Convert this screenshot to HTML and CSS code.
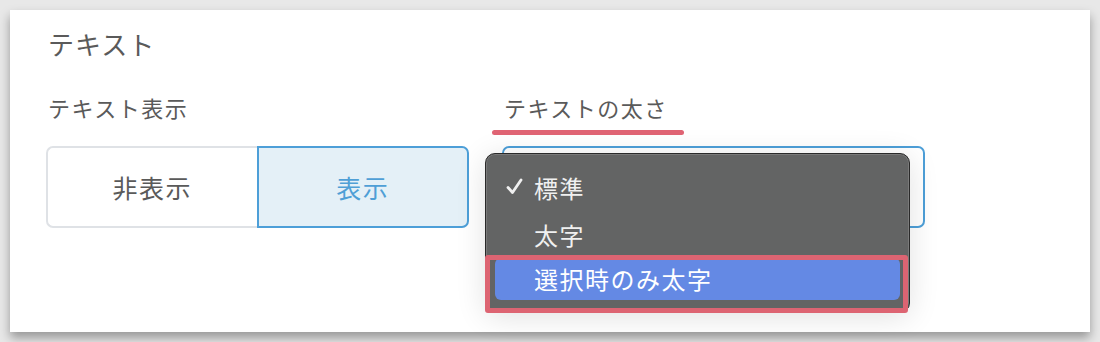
FILE: index.html
```html
<!DOCTYPE html>
<html lang="ja">
<head>
    <meta charset="UTF-8">
    <meta name="viewport" content="width=device-width, initial-scale=1.0">
    <title>テキスト設定</title>
    <link rel="stylesheet" href="styles.css">
</head>
<body>
    <div class="panel">
        <h2 class="panel-title">テキスト</h2>
        <div class="settings-row">
            <div class="setting">
                <div class="setting-label">テキスト表示</div>
                <div class="segmented">
                    <button class="segment">非表示</button>
                    <button class="segment active">表示</button>
                </div>
            </div>
            <div class="setting">
                <div class="setting-label marked">テキストの太さ</div>
                <div class="select-wrap">
                    <div class="select-box"></div>
                    <div class="popup-menu">
                        <div class="menu-item checked">
                            <svg class="check" width="17" height="17" viewBox="0 0 17 17"><path d="M2 9.5 L6.5 14.5 L15 2" fill="none" stroke="#f0f0f0" stroke-width="2.8" stroke-linecap="round" stroke-linejoin="round"/></svg>
                            標準
                        </div>
                        <div class="menu-item">太字</div>
                        <div class="menu-item highlighted">選択時のみ太字</div>
                        <div class="menu-mark"></div>
                    </div>
                </div>
            </div>
        </div>
    </div>
</body>
</html>
```

FILE: styles.css
```css
* {
    margin: 0;
    padding: 0;
    box-sizing: border-box;
    font-family: 'Noto Sans CJK JP', 'Noto Sans', sans-serif;
}
body {
    background-color: #e8e8e8;
    padding: 10px;
    height: 342px;
    overflow: hidden;
}
.panel {
    width: 1080px;
    height: 322px;
    background-color: white;
    box-shadow: 0 6px 10px rgba(0,0,0,0.35);
    padding: 16px 36px 0;
    color: #5a5a5a;
}
.panel-title {
    font-size: 26px;
    font-weight: normal;
    letter-spacing: 1px;
    line-height: 36px;
    padding-left: 2px;
}
.settings-row {
    display: flex;
    gap: 33px;
    margin-top: 30px;
}
.setting {
    width: 423px;
}
.setting-label {
    font-size: 22px;
    letter-spacing: 1.5px;
    line-height: 30px;
    padding-left: 2px;
    margin-bottom: 24px;
    position: relative;
}
.setting-label.marked::after {
    content: '';
    position: absolute;
    left: -10px;
    width: 192px;
    bottom: -13px;
    height: 5px;
    border-radius: 3px;
    background-color: #e06474;
}

/* Segmented control */
.segmented {
    display: flex;
    height: 82px;
}
.segment {
    flex: 1;
    background: white;
    border: 2px solid #dfe2e6;
    font-size: 25px;
    letter-spacing: 1.5px;
    color: #5a5a5a;
}
.segment:first-child {
    border-right: none;
    border-radius: 7px 0 0 7px;
}
.segment.active {
    background-color: #e4f0f7;
    border-color: #4d9fd8;
    color: #4f9fd6;
    border-radius: 0 7px 7px 0;
}

/* Select with open popup */
.select-wrap {
    position: relative;
}
.select-box {
    height: 82px;
    border: 2px solid #4d9fd8;
    border-radius: 7px;
}
.popup-menu {
    position: absolute;
    left: -17px;
    top: 7px;
    width: 425px;
    height: 160px;
    background-color: #636464;
    border: 1px solid #2a2a2a;
    border-radius: 10px;
    box-shadow: inset 0 0 0 1px #7a7a7a, 0 4px 30px rgba(0,0,0,0.12);
    padding: 10px 9px 0;
}
.menu-item {
    height: 47px;
    line-height: 47px;
    font-size: 24px;
    letter-spacing: 1.5px;
    color: #f0f0f0;
    padding-left: 39px;
    position: relative;
}
.menu-item .check {
    position: absolute;
    left: 11px;
    top: 14px;
}
.menu-item.highlighted {
    height: 42px;
    line-height: 42px;
    background-color: #6489e4;
    color: white;
    border-radius: 6px;
}
.menu-mark {
    position: absolute;
    left: -1px;
    right: 1px;
    top: 101px;
    bottom: -1px;
    border: 5px solid #dd6472;
    border-radius: 3px;
}
```
